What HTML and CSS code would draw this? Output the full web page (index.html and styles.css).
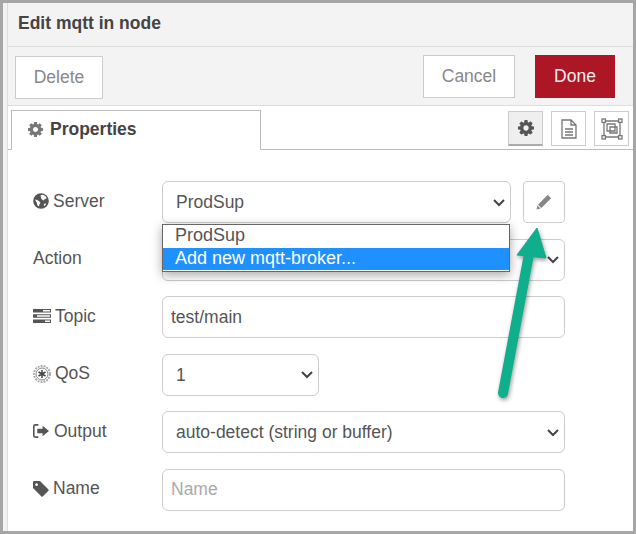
FILE: index.html
```html
<!DOCTYPE html>
<html lang="en">
<head>
  <meta charset="UTF-8" />
  <title>Edit mqtt in node</title>
  <link rel="stylesheet" href="styles.css">
</head>
<body>
  <div class="frame">
    <div class="tray">
      <div class="tray-title">Edit mqtt in node</div>
      <div class="toolbar">
        <button class="btn btn-delete">Delete</button>
        <div class="toolbar-right">
          <button class="btn btn-cancel">Cancel</button>
          <button class="btn btn-done">Done</button>
        </div>
      </div>
      <div class="tabs">
        <div class="tab">
          <svg class="icon-gear" viewBox="0 0 1536 1536"><path d="M1024 768q0-106-75-181t-181-75-181 75-75 181 75 181 181 75 181-75 75-181zm512-109v222q0 12-8 23t-20 13l-185 28q-19 54-39 91 35 50 107 138 10 12 10 25t-9 23q-27 37-99 108t-94 71q-12 0-26-9l-138-108q-44 23-91 38-16 136-29 186-7 28-36 28h-222q-14 0-24.5-8.5t-11.5-21.5l-28-184q-49-16-90-37l-141 107q-10 9-25 9-14 0-25-11-126-114-165-168-7-10-7-23 0-12 8-23 15-21 51-66.5t54-70.5q-27-50-41-99l-183-27q-13-2-21-12.5t-8-23.5v-222q0-12 8-23t19-13l186-28q14-46 39-92-40-57-107-138-10-12-10-24 0-10 9-23 26-36 98.5-107.5t94.5-71.5q13 0 26 10l138 107q44-23 91-38 16-136 29-186 7-28 36-28h222q14 0 24.5 8.5t11.5 21.5l28 184q49 16 90 37l142-107q9-9 24-9 13 0 25 10 129 119 165 170 7 8 7 22 0 12-8 23-15 21-51 66.5t-54 70.5q26 50 41 98l183 28q13 2 21 12.5t8 23.5z"/></svg>
          Properties
        </div>
        <div class="tab-buttons">
          <div class="tab-btn selected">
            <svg class="icon-gear dark" viewBox="0 0 1536 1536"><path d="M1024 768q0-106-75-181t-181-75-181 75-75 181 75 181 181 75 181-75 75-181zm512-109v222q0 12-8 23t-20 13l-185 28q-19 54-39 91 35 50 107 138 10 12 10 25t-9 23q-27 37-99 108t-94 71q-12 0-26-9l-138-108q-44 23-91 38-16 136-29 186-7 28-36 28h-222q-14 0-24.5-8.5t-11.5-21.5l-28-184q-49-16-90-37l-141 107q-10 9-25 9-14 0-25-11-126-114-165-168-7-10-7-23 0-12 8-23 15-21 51-66.5t54-70.5q-27-50-41-99l-183-27q-13-2-21-12.5t-8-23.5v-222q0-12 8-23t19-13l186-28q14-46 39-92-40-57-107-138-10-12-10-24 0-10 9-23 26-36 98.5-107.5t94.5-71.5q13 0 26 10l138 107q44-23 91-38 16-136 29-186 7-28 36-28h222q14 0 24.5 8.5t11.5 21.5l28 184q49 16 90 37l142-107q9-9 24-9 13 0 25 10 129 119 165 170 7 8 7 22 0 12-8 23-15 21-51 66.5t-54 70.5q26 50 41 98l183 28q13 2 21 12.5t8 23.5z"/></svg>
          </div>
          <div class="tab-btn">
            <svg class="icon-line" width="16" height="20" viewBox="0 0 16 20"><path d="M1 1h9l5 5v13H1zM10 1v5h5M4 10h8M4 13h8M4 16h8"/></svg>
          </div>
          <div class="tab-btn">
            <svg class="icon-line" width="22" height="22" viewBox="0 0 22 22"><path d="M3 3h16v16H3zM6 6h8v7H6zM9 9h7v6H9z"/><g class="corner"><rect x="1" y="1" width="3.4" height="3.4"/><rect x="17.6" y="1" width="3.4" height="3.4"/><rect x="1" y="17.6" width="3.4" height="3.4"/><rect x="17.6" y="17.6" width="3.4" height="3.4"/></g></svg>
          </div>
        </div>
      </div>
      <div class="form">
        <div class="row">
          <label class="label">
            <svg class="icon-solid" width="16" height="16" viewBox="0 0 16 16"><circle cx="8" cy="8" r="7.8"/><path class="cut" d="M7.6 2.2 10 1.7l2.6 1.5 1 2.3-2 .4-.7 1.7-1.6-.9-1.2-1.5zM2 6.5l2.2.4 2.3 1.5.9 1.6-1 1.6-.4 2-1.5-1-.8-3zM11.5 10.5l1.8.2-1.6 2.2-1-.7z"/></svg>
            Server
          </label>
          <select class="field server"><option>ProdSup</option><option>Add new mqtt-broker...</option></select>
          <button class="edit-btn">
            <svg class="icon-solid pencil" width="16" height="16" viewBox="0 0 15 15"><path d="M11 .8 14.2 4 5 13.2 1.8 10zM1.3 10.8l2.9 2.9-3.7.8z"/></svg>
          </button>
          <div class="dropdown">
            <div class="option">ProdSup</div>
            <div class="option active">Add new mqtt-broker...</div>
          </div>
        </div>
        <div class="row">
          <label class="label">Action</label>
          <select class="field"><option>Subscribe to single topic</option></select>
        </div>
        <div class="row">
          <label class="label">
            <svg class="icon-solid" width="18" height="14" viewBox="0 0 18 14"><path d="M0 0h18v3.6H0zM0 5.2h18v3.6H0zM0 10.4h18V14H0z"/><path class="cut" d="M10 1h7v1.4h-7zM4 6.3h13v1.4H4zM12 11.5h5v1.4h-5z"/></svg>
            Topic
          </label>
          <input class="field" type="text" value="test/main">
        </div>
        <div class="row">
          <label class="label">
            <svg class="icon-qos" width="18" height="18" viewBox="0 0 18 18"><circle class="ring" cx="9" cy="9" r="8"/><circle cx="9" cy="9" r="6"/><path class="star" d="M9 5v8M5.5 7l7 4M5.5 11l7-4"/></svg>
            QoS
          </label>
          <select class="field short"><option>1</option></select>
        </div>
        <div class="row">
          <label class="label output">
            <svg class="icon-solid" width="16" height="14" viewBox="0 0 15 13"><path d="M5 0v1.5H2.4q-.9 0-.9.9v8.2q0 .9.9.9H5V13H2.2Q0 13 0 10.8V2.2Q0 0 2.2 0z"/><path d="M9 1.5 15 6.5 9 11.5V8.5H4v-4h5z"/></svg>
            Output
          </label>
          <select class="field"><option>auto-detect (string or buffer)</option></select>
        </div>
        <div class="row">
          <label class="label">
            <svg class="icon-solid" width="16" height="16" viewBox="0 0 16 16"><path fill-rule="evenodd" d="M1.2 0H7l8.5 8.5q.5.6 0 1.2l-5.8 5.8q-.6.5-1.2 0L0 7V1.2Q0 0 1.2 0zM3.6 2.2a1.4 1.4 0 1 0 .01 0z"/></svg>
            Name
          </label>
          <input class="field" type="text" placeholder="Name">
        </div>
      </div>
    </div>
    <svg class="arrow" width="636" height="534" viewBox="0 0 636 534">
      <path class="arrow-line" d="M503 393 529 254"/>
      <path class="arrow-head" d="M537 228 546 258 517 255z"/>
    </svg>
  </div>
</body>
</html>
```

FILE: styles.css
```css
* {
  box-sizing: border-box;
}

html, body {
  margin: 0;
  height: 100%;
}

body {
  font-family: "Liberation Sans", Arial, sans-serif;
  font-size: 17.5px;
  color: #555;
  background: #fff;
}

.frame {
  position: relative;
  width: 636px;
  height: 534px;
  border: 3px solid #a6a6a6;
  background: #f3f3f3;
  padding-left: 4px;
  overflow: hidden;
}

.tray {
  height: 100%;
  background: #fff;
  border-left: 1px solid #ddd;
}

.tray-title {
  height: 44px;
  padding: 10px 0 0 10px;
  font-size: 17.5px;
  font-weight: bold;
  color: #444;
  background: #f3f3f3;
  border-bottom: 1px solid #ddd;
}

.toolbar {
  height: 59px;
  padding: 8px 18px 0 7px;
  display: flex;
  justify-content: space-between;
  align-items: flex-start;
  background: #f3f3f3;
  border-bottom: 1px solid #ddd;
}

.toolbar-right {
  display: flex;
  gap: 20px;
}

.btn {
  font-family: inherit;
  font-size: 17.5px;
  height: 43px;
  background: #fff;
  color: #888;
  border: 1px solid #ccc;
}

.btn-delete {
  width: 88px;
  margin-top: 1px;
}

.btn-cancel {
  width: 92px;
}

.btn-done {
  width: 80px;
  background: #ad1625;
  border-color: #ad1625;
  color: #eee;
}

.tabs {
  height: 44px;
  padding: 4px 4px 0 3px;
  display: flex;
  justify-content: space-between;
  border-bottom: 1px solid #bbb;
}

.tab {
  width: 250px;
  height: 40px;
  padding: 8px 0 0 16px;
  display: flex;
  align-items: flex-start;
  gap: 7px;
  font-weight: bold;
  color: #444;
  background: #fff;
  border: 1px solid #bbb;
  border-bottom: 1px solid #fff;
}

.icon-gear {
  width: 15px;
  height: 15px;
  margin-top: 3px;
  fill: #777;
}

.icon-gear.dark {
  width: 16px;
  height: 16px;
  margin: 0;
  fill: #555;
}

.tab-buttons {
  display: flex;
  gap: 8px;
}

.tab-btn {
  width: 35px;
  height: 35px;
  margin-top: 1px;
  display: flex;
  align-items: center;
  justify-content: center;
  background: #fff;
  border: 1px solid #ccc;
}

.tab-btn.selected {
  background: #efefef;
  border-bottom: 2px solid #aaa;
}

.icon-line {
  fill: none;
  stroke: #777;
  stroke-width: 1.3;
}

.icon-line .corner rect {
  fill: #fff;
}

.form {
  padding: 31px 0 0 25px;
  display: flex;
  flex-direction: column;
  gap: 15.5px;
}

.row {
  position: relative;
  height: 42px;
  display: flex;
  align-items: center;
}

.label {
  width: 129px;
  flex: none;
  display: flex;
  align-items: center;
  gap: 4px;
  margin-top: -2px;
}

.label.output {
  gap: 5px;
}

.icon-solid {
  fill: #555;
  flex: none;
}

.icon-solid .cut {
  fill: #fff;
}

.icon-qos {
  flex: none;
  fill: none;
  stroke: #888;
  stroke-width: 1;
}

.icon-qos .ring {
  stroke: #aaa;
  stroke-width: 2;
  stroke-dasharray: 2 1;
}

.icon-qos .star {
  stroke: #444;
  stroke-width: 1.5;
}

.field {
  width: 403px;
  height: 42px;
  padding: 0 8px 0 13px;
  font-family: inherit;
  font-size: 17.5px;
  color: #555;
  background: #fff;
  border: 1px solid #ccc;
  border-radius: 6px;
  outline: none;
}

select.field {
  appearance: none;
  background: #fff url("data:image/svg+xml,%3Csvg xmlns='http://www.w3.org/2000/svg' width='14' height='9' viewBox='0 0 14 9'%3E%3Cpath d='M2 2l5 5 5-5' fill='none' stroke='%23444' stroke-width='2'/%3E%3C/svg%3E") no-repeat right 4px center;
}

input.field {
  padding-left: 8px;
}

input.field::placeholder {
  color: #aaa;
}

.field.server {
  width: 349px;
}

.field.short {
  width: 157px;
}

.edit-btn {
  width: 42px;
  height: 42px;
  margin-left: 12px;
  display: flex;
  align-items: center;
  justify-content: center;
  background: #fff;
  border: 1px solid #ccc;
  border-radius: 4px;
}

.pencil {
  fill: #888;
}

.dropdown {
  position: absolute;
  z-index: 2;
  left: 129px;
  top: 43px;
  width: 348px;
  height: 48px;
  font-size: 18px;
  line-height: 20px;
  background: #fff;
  border: 1px solid #666;
  box-shadow: 0 3px 10px rgba(0, 0, 0, 0.35);
}

.option {
  padding-left: 12px;
  height: 23px;
}

.option.active {
  height: 22px;
  color: #fff;
  background: #1e90ff;
}

.arrow {
  position: absolute;
  z-index: 3;
  left: -3px;
  top: -3px;
  pointer-events: none;
  filter: drop-shadow(1px 2px 2px rgba(0, 0, 0, 0.4));
}

.arrow-line {
  fill: none;
  stroke: #0fae8c;
  stroke-width: 10;
  stroke-linecap: round;
}

.arrow-head {
  fill: #0fae8c;
  stroke: #0fae8c;
  stroke-width: 1;
  stroke-linejoin: round;
}
```
